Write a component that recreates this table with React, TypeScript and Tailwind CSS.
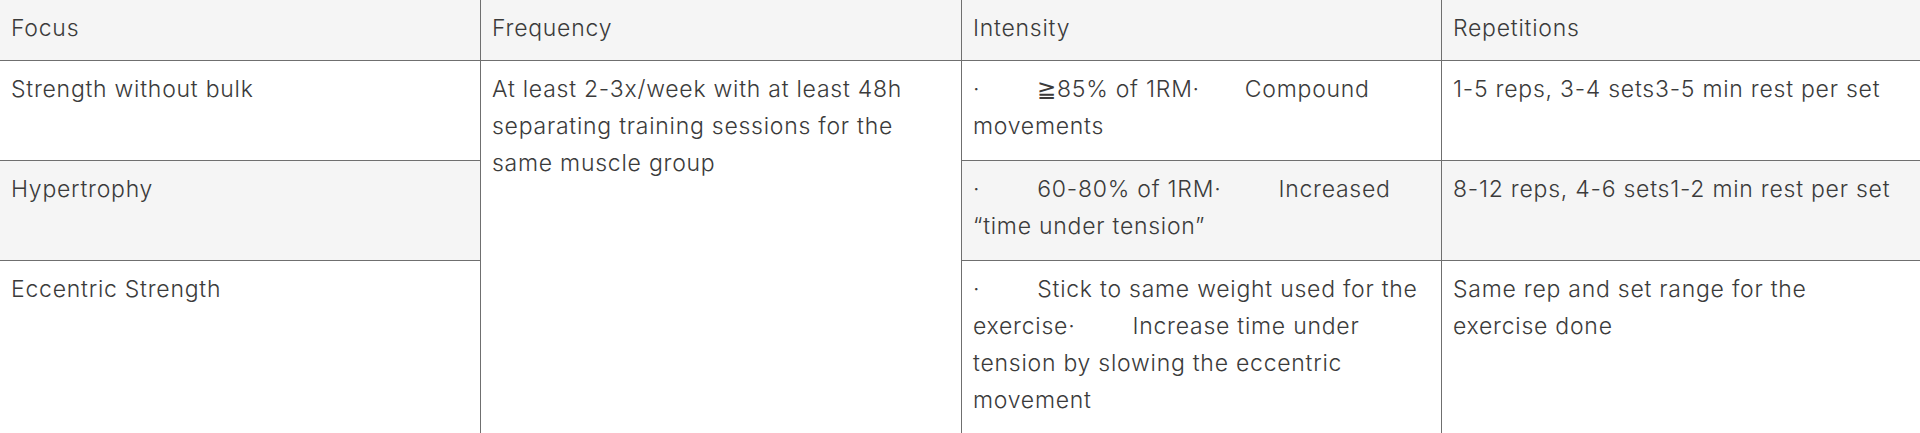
const cell = "px-[11px] pt-[10px] leading-[37px] border-b border-[#6f6f6f]";
const divider = "border-r border-[#6f6f6f]";

function Spacer({ narrow }: { narrow?: boolean }) {
  return <span className={narrow ? "inline-block w-[45px]" : "inline-block w-[57px]"} />;
}

export default function App() {
  return (
    <div
      className="h-[433px] w-[1920px] overflow-hidden bg-white text-[23px] font-light tracking-[0.75px] text-[#3b3b3b]"
      style={{ fontFamily: 'Inter, "Noto Sans", "DejaVu Sans", sans-serif' }}
    >
      <div className="grid h-full grid-cols-[481px_481px_480px_1fr] grid-rows-[61px_100px_100px_1fr]">
        {/* header */}
        <div className={`${cell} ${divider} bg-[#f5f5f5] pt-[7px]`}>Focus</div>
        <div className={`${cell} ${divider} bg-[#f5f5f5] pt-[7px]`}>Frequency</div>
        <div className={`${cell} ${divider} bg-[#f5f5f5] pt-[7px]`}>Intensity</div>
        <div className={`${cell} bg-[#f5f5f5] pt-[7px]`}>Repetitions</div>

        {/* strength without bulk */}
        <div className={`${cell} ${divider}`}>Strength without bulk</div>
        <div className={`row-span-3 px-[11px] pt-[10px] leading-[37px] ${divider}`}>
          At least 2-3x/week with at least 48h separating training sessions for the same muscle group
        </div>
        <div className={`${cell} ${divider}`}>
          <span className="whitespace-nowrap">
            ·<Spacer />≧85%
          </span>{" "}
          of{" "}
          <span className="whitespace-nowrap">
            1RM·<Spacer narrow />Compound
          </span>{" "}
          movements
        </div>
        <div className={cell}>1-5 reps, 3-4 sets3-5 min rest per set</div>

        {/* hypertrophy */}
        <div className={`${cell} ${divider} bg-[#f5f5f5]`}>Hypertrophy</div>
        <div className={`${cell} ${divider} bg-[#f5f5f5]`}>
          <span className="whitespace-nowrap">
            ·<Spacer />60-80%
          </span>{" "}
          of{" "}
          <span className="whitespace-nowrap">
            1RM·<Spacer />Increased
          </span>{" "}
          “time under tension”
        </div>
        <div className={`${cell} bg-[#f5f5f5]`}>8-12 reps, 4-6 sets1-2 min rest per set</div>

        {/* eccentric strength */}
        <div className={`px-[11px] pt-[10px] leading-[37px] ${divider}`}>Eccentric Strength</div>
        <div className={`px-[11px] pt-[10px] leading-[37px] ${divider}`}>
          <span className="whitespace-nowrap">
            ·<Spacer />Stick
          </span>{" "}
          to same weight used for the{" "}
          <span className="whitespace-nowrap">
            exercise·<Spacer />Increase
          </span>{" "}
          time under tension by slowing the eccentric movement
        </div>
        <div className="px-[11px] pt-[10px] leading-[37px]">
          Same rep and set range for the
          <br />
          exercise done
        </div>
      </div>
    </div>
  );
}
